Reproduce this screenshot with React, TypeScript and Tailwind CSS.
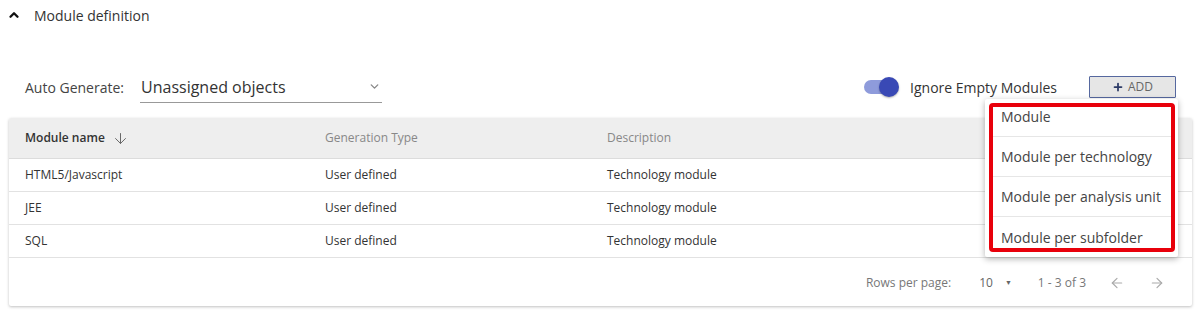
import React from 'react';
import { ChevronUp, ChevronDown, ArrowDown, ArrowLeft, ArrowRight, Plus } from 'lucide-react';

const ROWS = [
  { name: 'HTML5/Javascript', type: 'User defined', desc: 'Technology module' },
  { name: 'JEE', type: 'User defined', desc: 'Technology module' },
  { name: 'SQL', type: 'User defined', desc: 'Technology module' },
];

const MENU = ['Module', 'Module per technology', 'Module per analysis unit', 'Module per subfolder'];

const App: React.FC = () => {
  return (
    <div className="relative w-[1201px] h-[312px] bg-white text-[#333] font-['Open_Sans',sans-serif] overflow-hidden">
      {/* section title */}
      <div className="h-[30px] flex items-center pl-[7px]">
        <ChevronUp className="w-[14px] h-[14px] text-[#111]" strokeWidth={4} />
        <span className="ml-[13px] text-[14px] text-[#333]">Module definition</span>
      </div>

      {/* controls */}
      <div className="mt-[41px] h-[32px] flex items-center justify-between pl-[25px] pr-[25px]">
        <div className="flex items-center">
          <span className="text-[14px] text-[#444]">Auto Generate:</span>
          <div className="ml-[16px] w-[242px] h-[32px] flex items-center justify-between border-b border-[#999] pl-px pr-[1px]">
            <span className="text-[16px] text-[#333]">Unassigned objects</span>
            <ChevronDown className="w-[13px] h-[13px] text-[#888]" strokeWidth={2.5} />
          </div>
        </div>
        <div className="flex items-center">
          <div className="relative w-[36px] h-[20px] flex items-center">
            <div className="ml-[2px] w-[33px] h-[14px] rounded-full bg-[#8e9bdb]" />
            <div className="absolute right-[-1px] top-0 w-[20px] h-[20px] rounded-full bg-[#3949b5] shadow-[0_1px_2px_rgba(0,0,0,0.3)]" />
          </div>
          <span className="ml-[12px] text-[14px] text-[#333]">Ignore Empty Modules</span>
          <button className="ml-[32px] w-[87px] h-[22px] flex items-center justify-center gap-[4px] bg-[#e6e6e6] border border-[#56689f] rounded-[1px] text-[12px] text-[#666]">
            <Plus className="w-3 h-3 text-[#2c3a66]" strokeWidth={3.5} />
            ADD
          </button>
        </div>
      </div>

      {/* table card */}
      <div className="mt-[15px] ml-[9px] w-[1183px] rounded-[2px] bg-white shadow-[0_1px_3px_rgba(0,0,0,0.25)]">
        <div className="h-[41px] grid grid-cols-[300px_282px_1fr] items-center px-4 bg-[#eeeeee] border-b border-[#dcdcdc] rounded-t-[2px]">
          <div className="flex items-center text-[12px] font-semibold text-[#333]">
            Module name
            <ArrowDown className="ml-[7px] w-[17px] h-[17px] text-[#666]" strokeWidth={1.4} />
          </div>
          <div className="text-[12px] text-[#888]">Generation Type</div>
          <div className="text-[12px] text-[#888]">Description</div>
        </div>
        {ROWS.map((row) => (
          <div key={row.name} className="h-[33px] grid grid-cols-[300px_282px_1fr] items-center px-4 border-b border-[#e2e2e2] text-[12px] text-[#333]">
            <div>{row.name}</div>
            <div>{row.type}</div>
            <div>{row.desc}</div>
          </div>
        ))}
        <div className="h-[48px] flex items-center justify-end pr-[27px] pt-[2px] text-[12px] text-[#777]">
          <span>Rows per page:</span>
          <span className="ml-[28px] text-[#666]">10</span>
          <span className="ml-[12px] text-[7px] text-[#666]">▼</span>
          <span className="ml-[26px] text-[#777]">1 - 3 of 3</span>
          <ArrowLeft className="ml-[23px] w-4 h-4 text-[#aaa]" strokeWidth={1.8} />
          <ArrowRight className="ml-[24px] w-4 h-4 text-[#aaa]" strokeWidth={1.8} />
        </div>
      </div>

      {/* add menu */}
      <div className="absolute left-[985px] top-[99px] w-[193px] h-[158px] bg-white shadow-[0_2px_6px_rgba(0,0,0,0.3)] rounded-[2px] pt-[4px] pl-[4px] pr-[3px] pb-[5px]">
        <div className="h-full border-[4px] border-[#e8000b] rounded-[4px] overflow-hidden">
          <div className="-mt-[10px] -ml-[1px]">
            {MENU.map((item, i) => (
              <div
                key={item}
                className={`h-[40px] flex items-center pl-[9px] text-[14px] text-[#444] ${i < MENU.length - 1 ? 'border-b border-[#e6e6e6]' : ''}`}
              >
                {item}
              </div>
            ))}
          </div>
        </div>
      </div>
    </div>
  );
};

export default App;
